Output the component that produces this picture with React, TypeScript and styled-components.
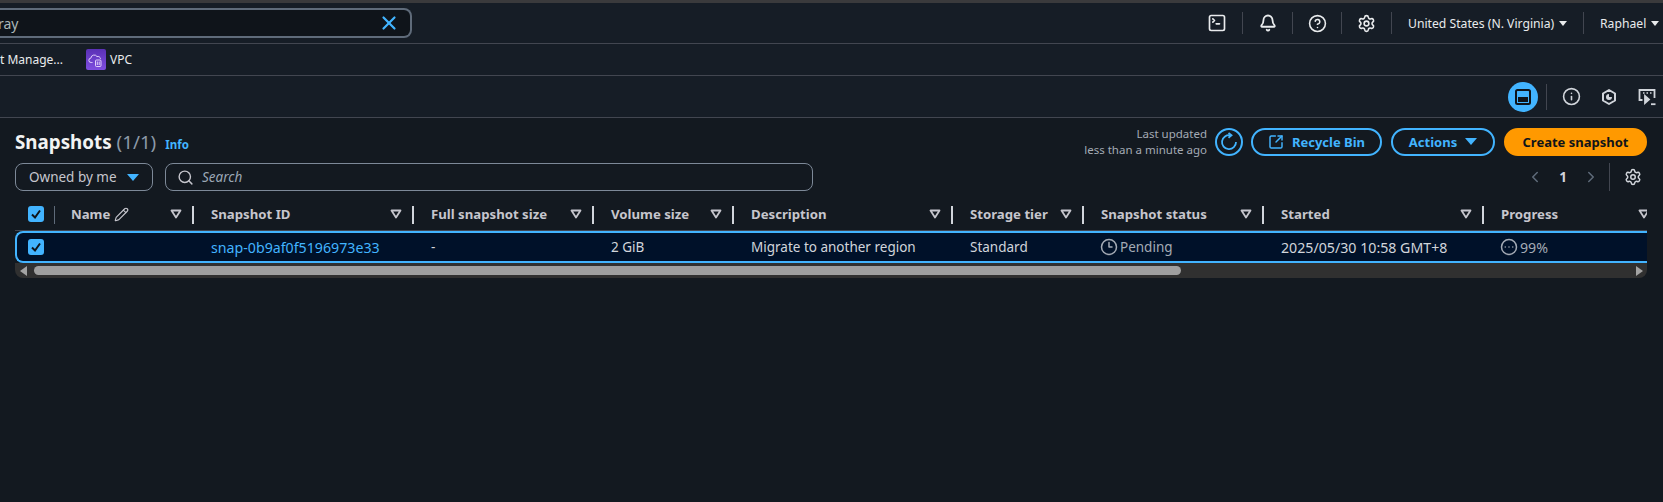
import React from 'react';
import styled, { createGlobalStyle } from 'styled-components';
import {
    Bell, ChevronLeft, ChevronRight, CircleEllipsis, CircleHelp, Clock3, Info, Pencil, Search,
    Settings, SquareArrowOutUpRight, SquareTerminal, X,
} from 'lucide-react';

const GlobalStyle = createGlobalStyle`
    html, body { margin: 0; padding: 0; background: #131920; }
    body { font-family: "Noto Sans", "Open Sans", sans-serif; color: #d1d5db; overflow: hidden; }
    * { box-sizing: border-box; }
`;

const Page = styled.div`
    width: 1663px;
    height: 502px;
    overflow: hidden;
    background: #131920;
`;

const TopStrip = styled.div`
    height: 3px;
    background: #3a3a3c;
`;

const NavBar = styled.header`
    height: 41px;
    display: flex;
    align-items: center;
    justify-content: space-between;
    background: #161d26;
    border-bottom: 1px solid #424650;
`;

const GlobalSearch = styled.div`
    width: 412px;
    height: 30px;
    display: flex;
    align-items: center;
    justify-content: space-between;
    padding: 0 10px 0 0;
    background: #0f141a;
    border: 2px solid #5f6b7a;
    border-left: none;
    border-radius: 0 8px 8px 0;
    color: #aab7b8;
    font-size: 14px;
    span { margin-left: -2px; }
`;

const NavTools = styled.div`
    display: flex;
    align-items: center;
    height: 100%;
`;

const NavItem = styled.div<{ $width: number; $text?: boolean }>`
    display: flex;
    align-items: center;
    justify-content: ${p => (p.$text ? 'flex-start' : 'center')};
    gap: 5px;
    height: 22px;
    width: ${p => p.$width}px;
    padding-left: ${p => (p.$text ? 16 : 0)}px;
    border-left: 1px solid #424650;
    color: #e9ebed;
    font-size: 12.2px;
    white-space: nowrap;
    &:first-child { border-left: none; }
`;

const Caret = styled.span<{ $color?: string; $size?: number }>`
    display: inline-block;
    width: 0;
    height: 0;
    border-left: ${p => p.$size ?? 4}px solid transparent;
    border-right: ${p => p.$size ?? 4}px solid transparent;
    border-top: ${p => (p.$size ?? 4) + 1}px solid ${p => p.$color ?? '#e9ebed'};
`;

const FavBar = styled.nav`
    height: 32px;
    display: flex;
    align-items: center;
    gap: 23px;
    background: #161d26;
    border-bottom: 1px solid #424650;
    color: #e9ebed;
    font-size: 12px;
`;

const Favorite = styled.span`
    display: flex;
    align-items: center;
    gap: 4px;
`;

const VpcBadge = styled.span`
    width: 20px;
    height: 21px;
    display: flex;
    align-items: center;
    justify-content: center;
    border-radius: 2px;
    background: linear-gradient(180deg, #5a30b5, #7f4ee0);
`;

const UtilityBar = styled.div`
    height: 42px;
    display: flex;
    align-items: center;
    justify-content: flex-end;
    gap: 18px;
    padding-right: 6px;
    background: #161d26;
    border-bottom: 1px solid #424650;
`;

const ActiveTool = styled.span`
    width: 30px;
    height: 30px;
    display: flex;
    align-items: center;
    justify-content: center;
    border-radius: 50%;
    background: #42b4ff;
    margin-right: -10px;
`;

const ToolDivider = styled.span`
    width: 1px;
    height: 26px;
    background: #424650;
    margin-right: -4px;
`;

const ToolButton = styled.span`
    width: 20px;
    display: flex;
    justify-content: center;
    color: #d1d5db;
`;

const Content = styled.main`
    padding: 0 16px 0 15px;
`;

const TitleRow = styled.div`
    height: 42px;
    display: flex;
    align-items: center;
    justify-content: space-between;
    padding-top: 5px;
`;

const TitleGroup = styled.div`
    display: flex;
    align-items: baseline;
    gap: 9px;
`;

const Title = styled.h1`
    margin: 0;
    font-size: 18.8px;
    font-weight: 700;
    color: #f2f3f3;
    span { font-weight: 400; color: #8d99a8; }
`;

const InfoLink = styled.a`
    font-size: 11.5px;
    font-weight: 700;
    color: #42b4ff;
`;

const Actions = styled.div`
    display: flex;
    align-items: center;
    gap: 9px;
`;

const LastUpdated = styled.div`
    text-align: right;
    font-size: 11.5px;
    line-height: 16px;
    color: #a4abb5;
    margin-right: -1px;
`;

const RefreshButton = styled.span`
    width: 28px;
    height: 28px;
    display: flex;
    align-items: center;
    justify-content: center;
    border: 2px solid #42b4ff;
    border-radius: 50%;
    color: #42b4ff;
    margin-right: -1px;
`;

const PillButton = styled.span<{ $primary?: boolean; $width: number }>`
    width: ${p => p.$width}px;
    height: 28px;
    display: flex;
    align-items: center;
    justify-content: center;
    gap: 8px;
    border-radius: 14px;
    border: 2px solid ${p => (p.$primary ? '#ff9900' : '#42b4ff')};
    background: ${p => (p.$primary ? '#ff9900' : 'transparent')};
    color: ${p => (p.$primary ? '#0f141a' : '#42b4ff')};
    font-size: 13px;
    font-weight: 700;
    white-space: nowrap;
`;

const FilterRow = styled.div`
    height: 28px;
    margin-top: 3px;
    display: flex;
    align-items: center;
    justify-content: space-between;
`;

const Filters = styled.div`
    display: flex;
    gap: 12px;
`;

const FilterSelect = styled.div`
    width: 138px;
    height: 28px;
    display: flex;
    align-items: center;
    justify-content: space-between;
    padding: 0 13px;
    border: 1px solid #7d8998;
    border-radius: 8px;
    color: #c6c6cd;
    font-size: 13.5px;
`;

const FilterSearch = styled.div`
    width: 648px;
    height: 28px;
    display: flex;
    align-items: center;
    gap: 8px;
    padding: 0 11px;
    border: 1px solid #7d8998;
    border-radius: 8px;
    color: #9ba7b6;
    font-size: 13.5px;
    font-style: italic;
    svg { color: #c6c6cd; }
`;

const Pager = styled.div`
    display: flex;
    align-items: center;
    margin-right: 5px;
    color: #5f6b7a;
    font-size: 13.5px;
    b { color: #d1d5db; margin: 0 15px; }
`;

const PagerSettings = styled.span`
    display: flex;
    align-items: center;
    height: 28px;
    margin-left: 9px;
    padding-left: 14px;
    border-left: 1px solid #424650;
    color: #d1d5db;
`;

const Table = styled.div`
    margin-top: 5px;
    width: 1632px;
    overflow: hidden;
`;

const columns = '139px 220px 180px 140px 219px 131px 180px 220px 166px';

const HeaderRow = styled.div`
    display: grid;
    grid-template-columns: 40px ${columns};
    height: 35px;
    border-bottom: 1px solid #424650;
`;

const HeaderCell = styled.div`
    position: relative;
    display: flex;
    align-items: center;
    justify-content: space-between;
    padding: 2px 12px 0 17px;
    font-size: 13.2px;
    font-weight: 700;
    color: #c6c6cd;
    white-space: nowrap;
    &::after {
        content: '';
        position: absolute;
        right: 0;
        top: 10px;
        height: 18px;
        width: 2px;
        background: #d1d5db;
    }
    &:last-child { padding-right: 0; }
    &:last-child::after { display: none; }
`;

const NameLabel = styled.span`
    display: flex;
    align-items: center;
    gap: 4px;
    margin-left: -1px;
`;

const SelectCell = styled.div<{ $header?: boolean }>`
    position: relative;
    display: flex;
    align-items: center;
    padding-left: ${p => (p.$header ? 13 : 11)}px;
    ${p => p.$header && `
        padding-top: 2px;
        &::after {
            content: '';
            position: absolute;
            right: 0;
            top: 10px;
            height: 18px;
            width: 1px;
            background: #5f6b7a;
        }
    `}
`;

const Checkbox = styled.span`
    width: 16px;
    height: 16px;
    display: flex;
    align-items: center;
    justify-content: center;
    border-radius: 3px;
    background: #42b4ff;
`;

const SortCaret = styled.svg`
    flex: none;
`;

const DataRow = styled.div`
    display: grid;
    grid-template-columns: 38px ${columns};
    height: 32px;
    background: #001129;
    border: 2px solid #42b4ff;
    border-right: none;
    border-radius: 8px 0 0 8px;
`;

const DataCell = styled.div<{ $link?: boolean; $muted?: boolean; $numeric?: boolean }>`
    display: flex;
    align-items: center;
    gap: 2px;
    padding-left: 17px;
    font-size: ${p => (p.$numeric || p.$link ? 14.2 : 13.5)}px;
    color: ${p => (p.$link ? '#42b4ff' : p.$muted ? '#a4abb5' : '#d1d5db')};
    white-space: nowrap;
    svg { margin-left: -1px; }
`;

const Scrollbar = styled.div`
    height: 15px;
    display: flex;
    align-items: center;
    gap: 7px;
    padding: 0 4px 0 5px;
    background: #303030;
    border-radius: 0 0 8px 8px;
`;

const ScrollThumb = styled.div`
    width: 1147px;
    height: 9px;
    border-radius: 5px;
    background: #9f9f9f;
`;

const ScrollTrack = styled.div`
    flex: 1;
`;

const ScrollArrow = styled.span<{ $right?: boolean }>`
    width: 0;
    height: 0;
    border-top: 5px solid transparent;
    border-bottom: 5px solid transparent;
    ${p => (p.$right ? 'border-left: 7px solid #a3a3a3;' : 'border-right: 7px solid #a3a3a3;')}
`;

const headers = ['Snapshot ID', 'Full snapshot size', 'Volume size', 'Description', 'Storage tier', 'Snapshot status', 'Started', 'Progress'];

const SortIcon = () => (
    <SortCaret width="12" height="10" viewBox="0 0 12 10">
        <path d="M1.5 1.5h9L6 8.5z" fill="none" stroke="#c6c6cd" strokeWidth="1.8" strokeLinejoin="round" />
    </SortCaret>
);

const CheckMark = () => (
    <svg width="12" height="12" viewBox="0 0 12 12">
        <path d="M2 6.5l3 3 5-7" fill="none" stroke="#0f141a" strokeWidth="2" />
    </svg>
);

const RefreshIcon = () => (
    <svg width="20" height="20" viewBox="0 0 20 20" fill="none" stroke="currentColor" strokeWidth="1.8">
        <path d="M11.5 3.3a7 7 0 1 0 5.5 6.7" />
        <path d="M9.5 1l3 2.3-3 2.5" />
    </svg>
);

const VpcIcon = () => (
    <svg width="16" height="16" viewBox="0 0 16 16" fill="none" stroke="#ecdfff" strokeWidth="0.9">
        <path d="M4.5 10.5H3.2a2.2 2.2 0 0 1-.3-4.4A3.3 3.3 0 0 1 9 4.6a2.6 2.6 0 0 1 3.5 2.2" />
        <rect x="7.5" y="8" width="5.5" height="6.5" rx="1" />
        <path d="M9.3 9.5v3.5M11.2 9.5v3.5" />
    </svg>
);

const HexIcon = () => (
    <svg width="18" height="18" viewBox="0 0 18 18" fill="none" stroke="#d1d5db" strokeWidth="2">
        <path d="M9 2l6 3.5v7L9 16l-6-3.5v-7z" strokeLinejoin="round" />
        <path d="M9 6a3 3 0 1 0 3 3H9z" fill="#d1d5db" stroke="none" />
    </svg>
);

const LabIcon = () => (
    <svg width="18" height="18" viewBox="0 0 18 18" fill="none" stroke="#d1d5db" strokeWidth="1.8">
        <path d="M4.5 12H1.5V2h15v8" />
        <path d="M5 5h1.5M8.5 5H10M12 5h1.5" strokeWidth="1.4" />
        <path d="M7 8l4 3.5-4 3.5z" fill="#d1d5db" />
        <path d="M13 16.2h4.5" />
    </svg>
);

const App = () => (
    <Page>
        <GlobalStyle />
        <TopStrip />
        <NavBar>
            <GlobalSearch>
                <span>ray</span>
                <X size={22} color="#42b4ff" strokeWidth={2.4} />
            </GlobalSearch>
            <NavTools>
                <NavItem $width={50}><SquareTerminal size={20} strokeWidth={2} /></NavItem>
                <NavItem $width={50}><Bell size={18} strokeWidth={2.4} /></NavItem>
                <NavItem $width={49}><CircleHelp size={19} strokeWidth={2} /></NavItem>
                <NavItem $width={50}><Settings size={19} strokeWidth={2} /></NavItem>
                <NavItem $width={192} $text>United States (N. Virginia)<Caret /></NavItem>
                <NavItem $width={80} $text>Raphael<Caret /></NavItem>
            </NavTools>
        </NavBar>
        <FavBar>
            <Favorite>t Manage...</Favorite>
            <Favorite><VpcBadge><VpcIcon /></VpcBadge>VPC</Favorite>
        </FavBar>
        <UtilityBar>
            <ActiveTool>
                <svg width="16" height="16" viewBox="0 0 16 16">
                    <rect x="1" y="1" width="14" height="14" rx="1.5" fill="none" stroke="#0f141a" strokeWidth="2" />
                    <rect x="3" y="8" width="10" height="5" fill="#0f141a" />
                </svg>
            </ActiveTool>
            <ToolDivider />
            <ToolButton><Info size={19} strokeWidth={2} /></ToolButton>
            <ToolButton><HexIcon /></ToolButton>
            <ToolButton><LabIcon /></ToolButton>
        </UtilityBar>
        <Content>
            <TitleRow>
                <TitleGroup>
                    <Title>Snapshots <span>(1/1)</span></Title>
                    <InfoLink>Info</InfoLink>
                </TitleGroup>
                <Actions>
                    <LastUpdated>Last updated<br />less than a minute ago</LastUpdated>
                    <RefreshButton><RefreshIcon /></RefreshButton>
                    <PillButton $width={131}><SquareArrowOutUpRight size={16} strokeWidth={2.2} />Recycle Bin</PillButton>
                    <PillButton $width={104}>Actions<Caret $color="#42b4ff" $size={6} /></PillButton>
                    <PillButton $primary $width={143}>Create snapshot</PillButton>
                </Actions>
            </TitleRow>
            <FilterRow>
                <Filters>
                    <FilterSelect>Owned by me<Caret $color="#42b4ff" $size={6} /></FilterSelect>
                    <FilterSearch><Search size={17} strokeWidth={2} />Search</FilterSearch>
                </Filters>
                <Pager>
                    <ChevronLeft size={18} strokeWidth={2} />
                    <b>1</b>
                    <ChevronRight size={18} strokeWidth={2} />
                    <PagerSettings><Settings size={18} strokeWidth={2} /></PagerSettings>
                </Pager>
            </FilterRow>
            <Table>
                <HeaderRow>
                    <SelectCell $header><Checkbox><CheckMark /></Checkbox></SelectCell>
                    <HeaderCell>
                        <NameLabel>Name <Pencil size={15} strokeWidth={1.8} /></NameLabel>
                        <SortIcon />
                    </HeaderCell>
                    {headers.map(h => (
                        <HeaderCell key={h}>{h}<SortIcon /></HeaderCell>
                    ))}
                </HeaderRow>
                <DataRow>
                    <SelectCell><Checkbox><CheckMark /></Checkbox></SelectCell>
                    <DataCell />
                    <DataCell $link>snap-0b9af0f5196973e33</DataCell>
                    <DataCell>-</DataCell>
                    <DataCell>2 GiB</DataCell>
                    <DataCell>Migrate to another region</DataCell>
                    <DataCell>Standard</DataCell>
                    <DataCell $muted><Clock3 size={18} strokeWidth={2} />Pending</DataCell>
                    <DataCell $numeric>2025/05/30 10:58 GMT+8</DataCell>
                    <DataCell $muted $numeric><CircleEllipsis size={18} strokeWidth={2} />99%</DataCell>
                </DataRow>
                <Scrollbar>
                    <ScrollArrow />
                    <ScrollThumb />
                    <ScrollTrack />
                    <ScrollArrow $right />
                </Scrollbar>
            </Table>
        </Content>
    </Page>
);

export default App;
